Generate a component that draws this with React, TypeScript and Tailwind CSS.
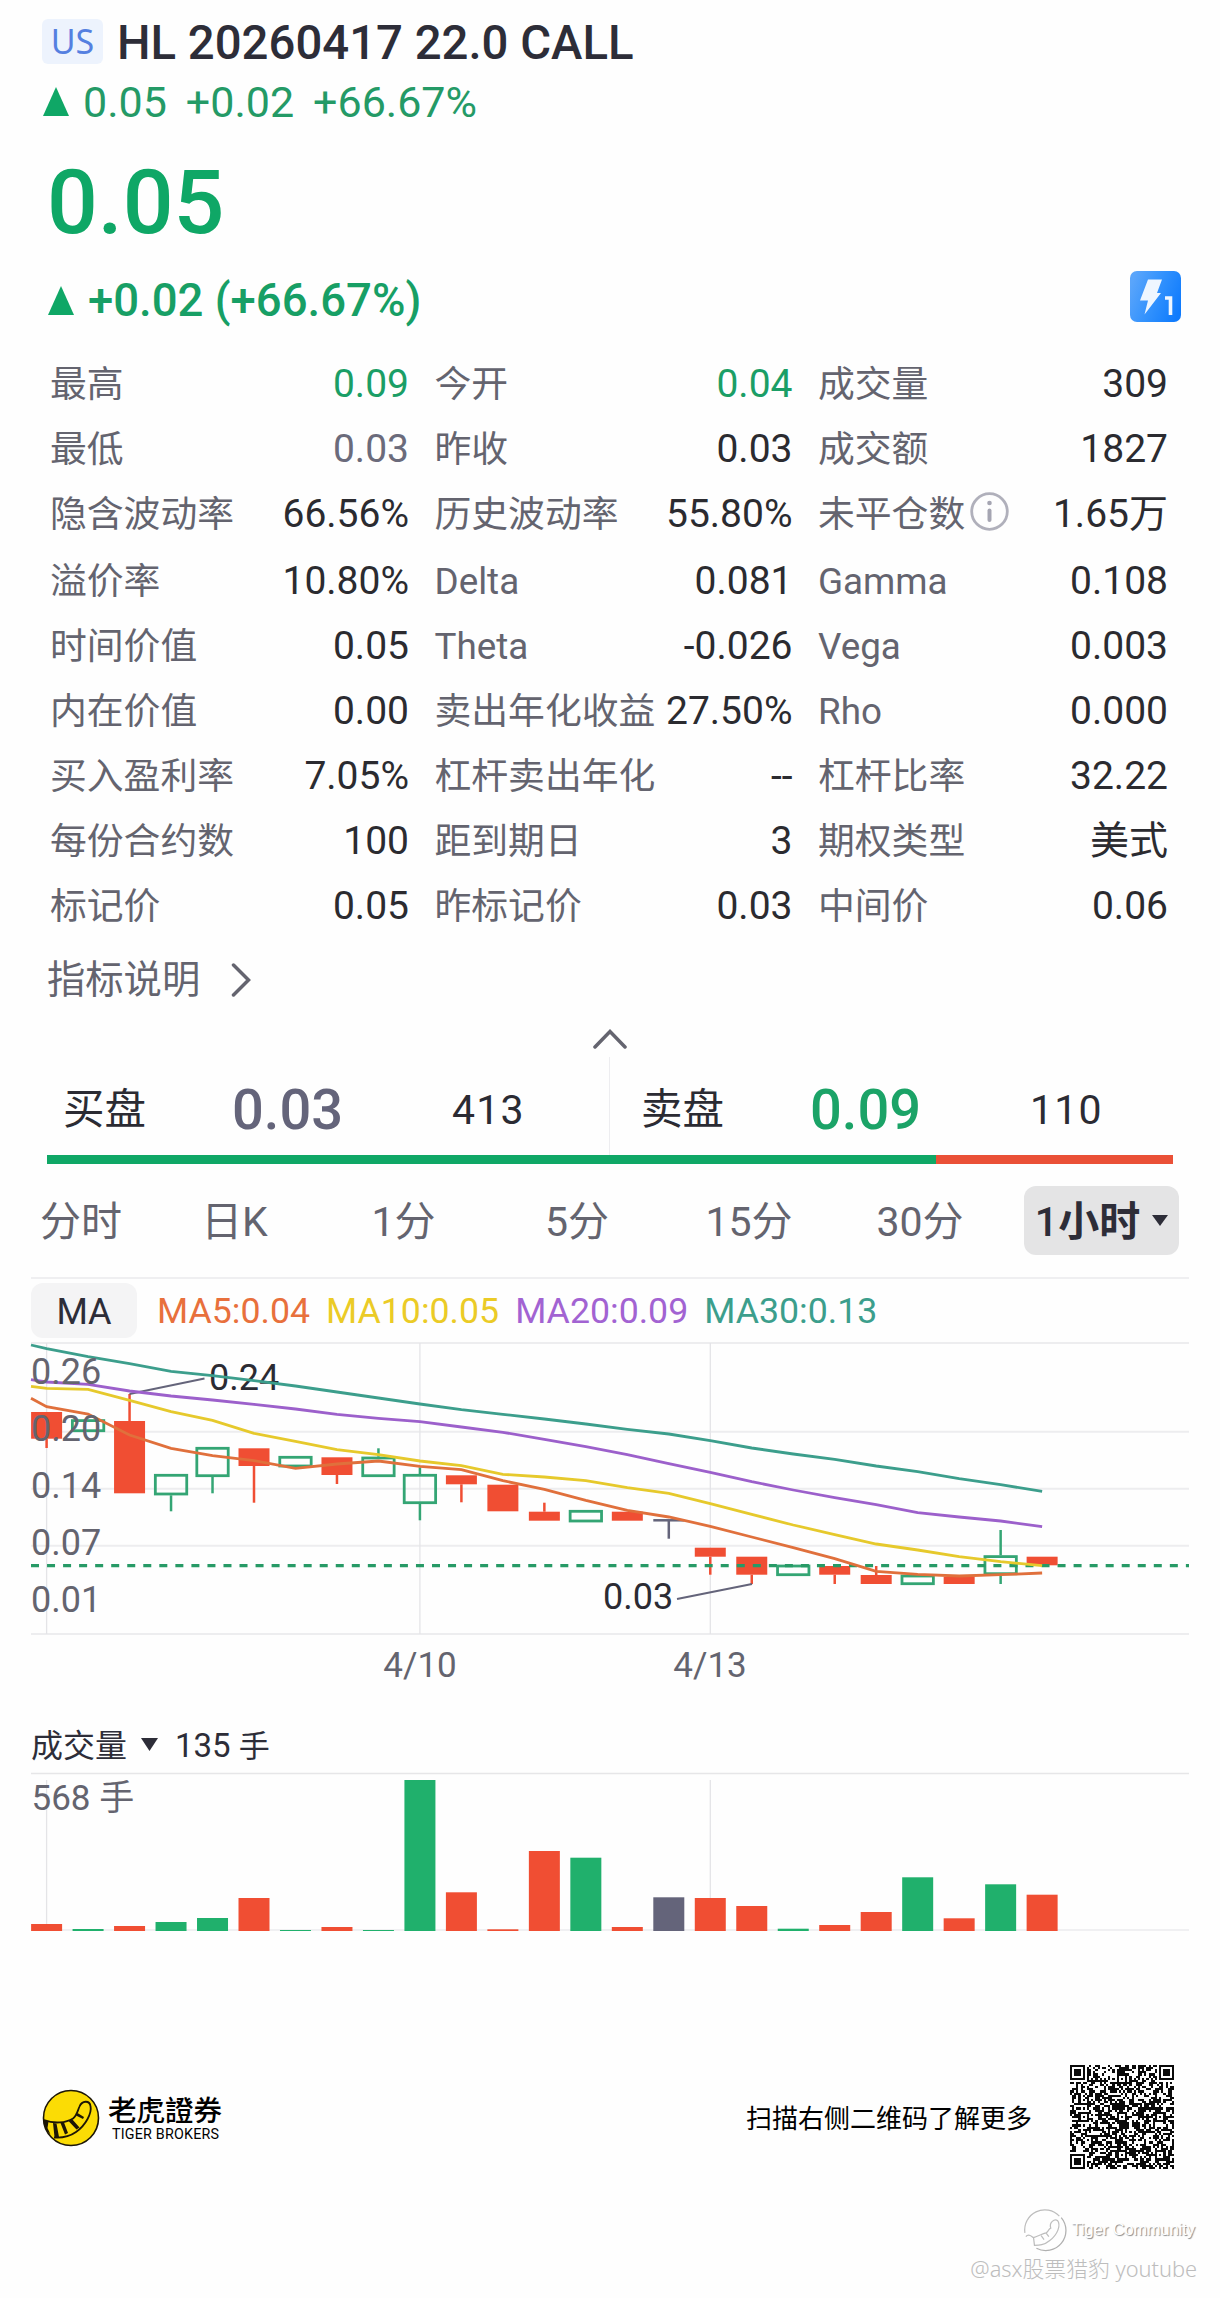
import React from "react";

const FONT = "font-['Roboto','Noto_Sans_CJK_SC',sans-serif]";

type Cell = { label: string; value: string; tone?: "up" | "flat"; info?: boolean };

const ROWS: Cell[][] = [
  [{ label: "最高", value: "0.09", tone: "up" }, { label: "今开", value: "0.04", tone: "up" }, { label: "成交量", value: "309" }],
  [{ label: "最低", value: "0.03", tone: "flat" }, { label: "昨收", value: "0.03" }, { label: "成交额", value: "1827" }],
  [{ label: "隐含波动率", value: "66.56%" }, { label: "历史波动率", value: "55.80%" }, { label: "未平仓数", value: "1.65万", info: true }],
  [{ label: "溢价率", value: "10.80%" }, { label: "Delta", value: "0.081" }, { label: "Gamma", value: "0.108" }],
  [{ label: "时间价值", value: "0.05" }, { label: "Theta", value: "-0.026" }, { label: "Vega", value: "0.003" }],
  [{ label: "内在价值", value: "0.00" }, { label: "卖出年化收益", value: "27.50%" }, { label: "Rho", value: "0.000" }],
  [{ label: "买入盈利率", value: "7.05%" }, { label: "杠杆卖出年化", value: "--" }, { label: "杠杆比率", value: "32.22" }],
  [{ label: "每份合约数", value: "100" }, { label: "距到期日", value: "3" }, { label: "期权类型", value: "美式" }],
  [{ label: "标记价", value: "0.05" }, { label: "昨标记价", value: "0.03" }, { label: "中间价", value: "0.06" }],
];

const TABS = [
  { label: "分时", width: "w-[164px]" },
  { label: "日K", width: "w-[143px]" },
  { label: "1分", width: "w-[195px]" },
  { label: "5分", width: "w-[152px]" },
  { label: "15分", width: "w-[192px]" },
  { label: "30分", width: "w-[150px]" },
];

const RED = "#f04e33";
const GREEN = "#34a574";
const GRAY = "#64647a";

const xAt = (i: number) => 46.6 + 41.48 * i;

// kind, body top, body bottom, wick top, wick bottom (chart-local pixels)
type Candle = ["r" | "g" | "d", number, number, number, number];
const CANDLES: Candle[] = [
  ["r", 70, 96.7, 70, 106],
  ["g", 77.3, 90, 77.3, 90],
  ["r", 79, 151.3, 52, 151.3],
  ["g", 132, 153.3, 132, 169.3],
  ["g", 105, 135, 105, 151.3],
  ["r", 106.3, 124, 106.3, 160.7],
  ["g", 114, 125.3, 114, 125.3],
  ["r", 115.3, 133, 115.3, 142],
  ["g", 114.7, 135, 106.3, 135],
  ["g", 132, 162, 125.3, 178.3],
  ["r", 133.3, 142.3, 133.3, 160.3],
  ["r", 142.7, 169.3, 142.7, 169.3],
  ["r", 169.7, 178.7, 160.7, 178.7],
  ["g", 168, 180.3, 168, 180.3],
  ["r", 169.7, 178.7, 169.7, 178.7],
  ["d", 178.3, 178.3, 178.3, 196.7],
  ["r", 205.7, 214.7, 205.7, 232.7],
  ["r", 214.7, 232.7, 214.7, 242],
  ["g", 222.7, 234, 222.7, 234],
  ["r", 224, 232.7, 224, 242],
  ["r", 233, 242, 224, 242],
  ["g", 232.7, 243, 232.7, 243],
  ["r", 234.7, 242, 234.7, 242],
  ["g", 213.3, 233, 188, 242],
  ["r", 214.7, 223.3, 214.7, 223.3],
];

// first value sits on the plot's left edge, the rest on candle centres
const MA30 = [3, 6.7, 14.7, 21.7, 29.3, 33.7, 38.7, 44, 50, 56, 62, 67.7, 72.3, 77, 82, 87.3, 92, 98.7, 106, 112, 117.3, 124, 129.7, 136.7, 142.7, 149.3];
const MA20 = [37.7, 40, 42.3, 49, 54, 58, 62.3, 67, 72.3, 76.3, 79.7, 85, 90.3, 97.3, 104.7, 112.7, 121.7, 130.3, 139.7, 148, 155.7, 162.7, 170.7, 175, 179, 184.7];
const MA10 = [44.3, 46.3, 47.3, 58.3, 69.7, 78.3, 91.3, 99.3, 107.7, 112.7, 119, 123.7, 132.3, 135, 138.7, 145.7, 151.3, 161.7, 172.3, 183, 192.7, 202, 208, 214.7, 219.7, 223.7];
const MA5 = [56.3, 64.7, 72, 93, 106.3, 113.7, 118.7, 126.3, 122, 119, 124.3, 127.7, 138.7, 147.3, 158.3, 168.3, 175, 184.3, 195, 205.7, 216.7, 229.3, 232.3, 234, 232.7, 231];

const linePoints = (ys: number[]) => ys.map((y, i) => `${i === 0 ? 31 : xAt(i - 1)},${y}`).join(" ");

const VOLUMES: [number, string][] = [
  [7, "r"], [2, "g"], [5, "r"], [9, "g"], [13, "g"], [33, "r"], [1, "g"], [4, "r"], [1, "g"], [151, "g"],
  [38.7, "r"], [1.7, "r"], [80, "r"], [73.3, "g"], [4, "r"], [33.7, "d"], [33, "r"], [25, "r"], [2.3, "g"], [6, "r"],
  [19, "r"], [53.7, "g"], [12.7, "r"], [46.7, "g"], [36.3, "r"],
];
const VOL_FILL: Record<string, string> = { r: RED, g: "#20b06c", d: "#64647a" };

function UpTriangle() {
  return (
    <svg className="h-[29px] w-[26px] shrink-0" viewBox="0 0 26 29">
      <path d="M13 0 L26 29 H0 Z" fill="#0fa766" />
    </svg>
  );
}

function FlashBadge() {
  return (
    <svg className="h-[51px] w-[51px]" viewBox="0 0 51 51">
      <defs>
        <linearGradient id="flash" x1="0" y1="0.3" x2="1" y2="0.7">
          <stop offset="0" stopColor="#5aa5fb" />
          <stop offset="0.5" stopColor="#3191fd" />
          <stop offset="1" stopColor="#0f7bfd" />
        </linearGradient>
      </defs>
      <rect width="51" height="51" rx="7" fill="url(#flash)" />
      <path d="M18 8.5 H32 L27 22 H31 L14.500 43.500 L18 29.500 H10 Z" fill="#eef6ff" />
      <path d="M35 27 H40.500 V44" fill="none" stroke="#eef6ff" strokeWidth="3.600" />
    </svg>
  );
}

function PriceChart() {
  return (
    <svg className={`block h-[348px] w-[1220px] ${FONT}`} viewBox="0 0 1220 348">
      <g stroke="#ededef" strokeWidth="2">
        {[1, 89.7, 146.7, 203.7, 292].map((y) => (
          <line key={y} x1="31" x2="1189" y1={y} y2={y} />
        ))}
      </g>
      <g stroke="#e4e4e7" strokeWidth="1.300">
        {[46.6, 419.9, 710.3].map((x) => (
          <line key={x} x1={x} x2={x} y1="1" y2="292" />
        ))}
      </g>
      {CANDLES.map(([kind, top, bottom, hi, lo], i) => {
        const x = xAt(i);
        if (kind === "d")
          return (
            <g key={i} stroke={GRAY} strokeWidth="2.500">
              <line x1={x - 15.5} x2={x + 15.5} y1={top} y2={top} />
              <line x1={x} x2={x} y1={hi} y2={lo} />
            </g>
          );
        const colour = kind === "r" ? RED : GREEN;
        return (
          <g key={i}>
            {hi < top && <line x1={x} x2={x} y1={hi} y2={top} stroke={colour} strokeWidth="2.500" />}
            {lo > bottom && <line x1={x} x2={x} y1={bottom} y2={lo} stroke={colour} strokeWidth="2.500" />}
            {kind === "r" ? (
              <rect x={x - 15.5} y={top} width="31" height={bottom - top} fill={colour} />
            ) : (
              <rect x={x - 15.7} y={top + 1.3} width="31.400" height={bottom - top - 2.6} fill="none" stroke={colour} strokeWidth="2.800" />
            )}
          </g>
        );
      })}
      <g stroke={GRAY} strokeWidth="1.800">
        <line x1="129.500" y1="52" x2="204.500" y2="36.500" />
        <line x1="752" y1="242" x2="677" y2="257" />
      </g>
      <g fill="#2b2b33" fontSize="36">
        <text x="209" y="47.500">0.24</text>
        <text x="603" y="267">0.03</text>
      </g>
      <line x1="31" x2="1189" y1="223.700" y2="223.700" stroke="#279a66" strokeWidth="3.300" strokeDasharray="8 8.040" />
      <g fill="none" strokeWidth="2.800">
        <polyline points={linePoints(MA5)} stroke="#e0703c" />
        <polyline points={linePoints(MA10)} stroke="#e6c92c" />
        <polyline points={linePoints(MA20)} stroke="#9c60cb" />
        <polyline points={linePoints(MA30)} stroke="#3c9e8c" />
      </g>
      <g fill="#64646f" fontSize="36">
        <text x="31" y="42">0.26</text>
        <text x="31" y="99">0.20</text>
        <text x="31" y="156">0.14</text>
        <text x="31" y="213">0.07</text>
        <text x="31" y="270">0.01</text>
      </g>
      <g fill="#64646f" fontSize="35" textAnchor="middle">
        <text x="420" y="335">4/10</text>
        <text x="710" y="335">4/13</text>
      </g>
    </svg>
  );
}

function VolumeChart() {
  return (
    <svg className={`block h-[163px] w-[1220px] ${FONT}`} viewBox="0 0 1220 163">
      <line x1="31" x2="1189" y1="1.500" y2="1.500" stroke="#e6e6e8" strokeWidth="1.500" />
      <line x1="31" x2="1189" y1="158" y2="158" stroke="#f0f0f2" strokeWidth="2" />
      <line x1="46.600" x2="46.600" y1="8" y2="158" stroke="#e4e4e7" strokeWidth="1.300" />
      <line x1="710.300" x2="710.300" y1="8" y2="158" stroke="#e4e4e7" strokeWidth="1.300" />
      {VOLUMES.map(([h, kind], i) => (
        <rect key={i} x={xAt(i) - 15.5} y={159 - h} width="31" height={h} fill={VOL_FILL[kind]} />
      ))}
      <text x="31.500" y="37.500" fontSize="35" fill="#64646f">568 手</text>
    </svg>
  );
}

function TigerLogo() {
  return (
    <svg className="h-[58px] w-[58px]" viewBox="0 0 58 58">
      <circle cx="29" cy="29" r="27.500" fill="#fbdc05" stroke="#1c1606" strokeWidth="1.600" />
      <path d="M2 31 C12 35 24 34 31 29.500 C35 26.500 35.500 22 37.500 17.500 C40 11.500 47.500 11 48.500 17 C50 24 44 36 34 43 C27 48 19 49 12 48.500" fill="none" stroke="#1c1606" strokeWidth="1.800" />
      <path d="M1.500 30.500 L6.500 32.500 L5.500 39 L8.500 45.500 C4 42 1.500 37 1.500 30.500 Z" fill="#1c1606" />
      <path d="M11 34 L14.500 34.500 L17 48 L12.500 48 Z M18.500 34 L22 33.500 L26 44 L23 45.500 Z M26.500 32 L30 30 L37.500 38.500 L34.500 40.500 Z M34 26.500 L35.500 24 L42 28 L41 30 Z" fill="#1c1606" />
    </svg>
  );
}

const QR_SIZE = 49;
function qrPath() {
  const inFinder = (x: number, y: number, ox: number, oy: number) => x >= ox && x < ox + 8 && y >= oy && y < oy + 8;
  let seed = 20260417;
  let d = "";
  for (let y = 0; y < QR_SIZE; y++) {
    for (let x = 0; x < QR_SIZE; x++) {
      seed = (Math.imul(seed, 1664525) + 1013904223) >>> 0;
      let dark = (seed >>> 16) % 100 < 54;
      if (x === 6) dark = y % 2 === 0;
      if (y === 6) dark = x % 2 === 0;
      for (const [cx, cy] of [[24, 6], [6, 24], [24, 24], [42, 24], [24, 42], [42, 42]]) {
        const r = Math.max(Math.abs(x - cx), Math.abs(y - cy));
        if (r <= 2) dark = r !== 1;
      }
      if (inFinder(x, y, 0, 0) || inFinder(x, y, QR_SIZE - 8, 0) || inFinder(x, y, 0, QR_SIZE - 8)) {
        const cx = x < 8 ? 3 : QR_SIZE - 4;
        const cy = y < 8 ? 3 : QR_SIZE - 4;
        const r = Math.max(Math.abs(x - cx), Math.abs(y - cy));
        dark = r === 3 || r <= 1;
      }
      if (dark) d += `M${x} ${y}h1v1h-1z`;
    }
  }
  return d;
}

function WatermarkLogo() {
  return (
    <svg className="h-[44px] w-[44px]" viewBox="0 0 46 46" fill="none" stroke="#bdbdbd" strokeWidth="1.300">
      <path d="M2 26 A21 21 0 0 1 38 8.500" />
      <path d="M40 10 A21 21 0 0 1 14 42" stroke="#b0b0b0" />
      <path d="M3 30 C6 26 9 30 11 31 C17 29 20 27 24 26 C27 25 26 22 29 21 C27 15 33 11 36 13 C40 18 36 28 28 34 C22 39 17 39 12 39 L11 31 M24 26 L27 30 M19 29 L22 33" />
    </svg>
  );
}

const TONES = { up: "text-[#1b9e66]", flat: "text-[#6b6b7b]", plain: "text-[#2b2b30]" };

export default function App() {
  return (
    <div className={`flex h-[2298px] w-[1220px] flex-col overflow-hidden bg-[#fefefe] ${FONT}`}>
      <div className="flex h-[84px] items-center pl-[42px]">
        <div className="-mt-[2px] flex h-[45px] w-[61px] items-center justify-center rounded-md bg-[#edf3fd] font-['Noto_Sans',sans-serif] text-[34px] leading-none text-[#5580e0]">US</div>
        <div className="ml-[14px] pt-[3px] text-[47.300px] leading-none font-medium whitespace-pre text-[#2d2d38]">HL 20260417 22.0 CALL</div>
      </div>
      <div className="flex h-[34px] items-center pl-[43px] text-[43px] leading-none text-[#249a66]">
        <UpTriangle />
        <span className="ml-[14px] pt-[3px]">0.05</span>
        <span className="ml-[19px] pt-[3px]">+0.02</span>
        <span className="ml-[19px] pt-[3px]">+66.67%</span>
      </div>
      <div className="flex h-[166px] items-center pt-[3px] pl-[47px] text-[89.500px] leading-none font-medium text-[#0fa766]">0.05</div>
      <div className="flex h-[32px] items-center justify-between pr-[39px] pl-[48px]">
        <div className="flex items-center text-[45.500px] leading-none font-medium text-[#179f65]">
          <UpTriangle />
          <span className="ml-[14px] pt-[1px]">+0.02 (+66.67%)</span>
        </div>
        <div className="-mt-2">
          <FlashBadge />
        </div>
      </div>

      <div className="mt-[36px] flex flex-col">
        {ROWS.map((row, r) => (
          <div key={r} className={`grid h-[65px] grid-cols-[359px_358px_350px] items-center gap-x-[25.500px] pl-[50px] ${r === 3 ? "mt-[2px]" : ""}`}>
            {row.map((cell) => (
              <div key={cell.label} className="flex items-center justify-between leading-none whitespace-nowrap">
                <span className="flex items-center pt-[2px] text-[36.800px] text-[#64646f]">
                  {cell.label}
                  {cell.info && (
                    <svg className="-mt-[8px] ml-[5px] h-[39px] w-[39px]" viewBox="0 0 39 39">
                      <circle cx="19.500" cy="19.500" r="17.800" fill="none" stroke="#b0b0bb" strokeWidth="2.800" />
                      <circle cx="19.500" cy="11" r="2.300" fill="#a5a5b2" />
                      <line x1="19.500" x2="19.500" y1="18.500" y2="28" stroke="#a5a5b2" strokeWidth="4" strokeLinecap="round" />
                    </svg>
                  )}
                </span>
                <span className={`text-[39px] ${TONES[cell.tone ?? "plain"]}`}>{cell.value}</span>
              </div>
            ))}
          </div>
        ))}
      </div>

      <div className="flex h-[82px] items-center pl-[47px] text-[38.300px] leading-none text-[#64646f]">
        指标说明
        <svg className="ml-[31px] h-[34px] w-[20px]" viewBox="0 0 20 34">
          <path d="M2.500 2 L17.500 17 L2.500 32" fill="none" stroke="#64646f" strokeWidth="3.500" strokeLinecap="round" />
        </svg>
      </div>
      <div className="flex h-[36px] items-center justify-center">
        <svg className="h-[20px] w-[34px]" viewBox="0 0 34 20">
          <path d="M2 18 L17 2.500 L32 18" fill="none" stroke="#64646f" strokeWidth="3.500" strokeLinecap="round" />
        </svg>
      </div>

      <div className="flex h-[98px] leading-none text-[#2b2b33]">
        <div className="flex w-[610px] items-center border-r border-[#ededf0] pt-[8px] pl-[63px]">
          <span className="w-[169px] text-[41.500px]">买盘</span>
          <span className="w-[220px] text-[56px] font-medium text-[#64647a]">0.03</span>
          <span className="text-[41px] tracking-[1.200px]">413</span>
        </div>
        <div className="flex items-center pt-[8px] pl-[31px]">
          <span className="w-[169px] text-[41.500px]">卖盘</span>
          <span className="w-[220px] text-[56px] font-medium text-[#1ba367]">0.09</span>
          <span className="text-[41px] tracking-[1.200px]">110</span>
        </div>
      </div>
      <div className="mr-[47px] ml-[47px] flex h-[9px]">
        <div className="w-[889px] bg-[#0fa766]" />
        <div className="flex-1 bg-[#ea5037]" />
      </div>

      <div className="flex h-[113px] items-center text-[41px] leading-none text-[#64646f]">
        {TABS.map((tab) => (
          <div key={tab.label} className={`pt-[4px] pr-[2px] text-center ${tab.width}`}>{tab.label}</div>
        ))}
        <div className="ml-[28px] flex h-[69px] w-[155px] items-center justify-center rounded-xl bg-[#e4e4e5] font-medium text-[#2d2d38]">
          <span className="pt-[3px]">
            1<span className="font-bold">小时</span>
          </span>
          <svg className="ml-[12px] h-[11px] w-[16px]" viewBox="0 0 16 11">
            <path d="M0 0 H16 L8 11 Z" fill="#2d2d38" />
          </svg>
        </div>
      </div>

      <div className="mr-[31px] ml-[31px] h-[2px] bg-[#efeff1]" />
      <div className="flex h-[63px] items-center pl-[31px] text-[35.700px] leading-none">
        <div className="flex h-[55px] w-[106px] items-center justify-center rounded-xl bg-[#f4f4f5] pt-[2px] text-[36px] text-[#2d2d38]">MA</div>
        <span className="ml-[20px] pt-[2px] text-[#e8703c]">MA5:0.04</span>
        <span className="ml-[16px] pt-[2px] text-[#ebcb26]">MA10:0.05</span>
        <span className="ml-[16px] pt-[2px] text-[#a263d2]">MA20:0.09</span>
        <span className="ml-[16px] pt-[2px] text-[#3c9e8c]">MA30:0.13</span>
      </div>
      <PriceChart />
      <div className="flex h-[82px] items-center pt-[29px] pl-[31px] text-[32px] leading-none text-[#2d2d38]">
        成交量
        <svg className="-mt-[3px] mr-[17px] ml-[14px] h-[13px] w-[17px]" viewBox="0 0 17 13">
          <path d="M0 0 H17 L8.500 13 Z" fill="#2d2d38" />
        </svg>
        <span className="text-[33px]">135 <span className="text-[31px]">手</span></span>
      </div>
      <VolumeChart />

      <div className="mt-[127px] flex h-[112px] items-center justify-between pr-[46px] pl-[42px] text-black">
        <div className="flex items-center">
          <TigerLogo />
          <div className="ml-[8px] flex flex-col">
            <span className="font-['Noto_Sans_CJK_TC',sans-serif] text-[28.500px] leading-[28px] font-medium">老虎證券</span>
            <span className="mt-[3px] ml-[4px] text-[14.300px] leading-[16px] tracking-[0.200px]">TIGER BROKERS</span>
          </div>
        </div>
        <div className="flex items-center">
          <span className="mr-[38px] pt-px text-[26px] leading-none">扫描右侧二维码了解更多</span>
          <svg className="-mt-[2px] h-[104px] w-[104px]" viewBox="0 0 49 49" shapeRendering="crispEdges">
            <path d={qrPath()} fill="#0a0a0a" />
          </svg>
        </div>
      </div>

      <div className="mt-[33px] flex flex-col items-end pr-[23px]">
        <div className="flex h-[45px] items-center pr-[2px] font-['Liberation_Sans',sans-serif] text-[16.300px] text-white [text-shadow:1px_1px_1px_#888]">
          <WatermarkLogo />
          <span className="ml-[5px] leading-none">Tiger Community</span>
        </div>
        <div className="mt-[3px] font-['Noto_Sans','Noto_Sans_CJK_SC',sans-serif] text-[21.800px] leading-[28px] font-light text-[#bdbdbd]">@asx股票猎豹 youtube</div>
      </div>
    </div>
  );
}
